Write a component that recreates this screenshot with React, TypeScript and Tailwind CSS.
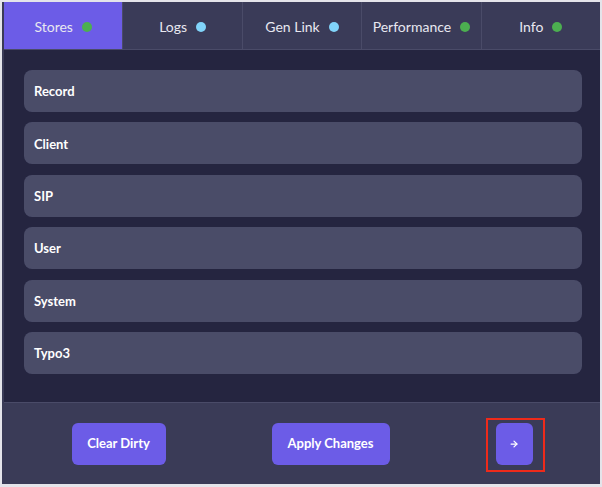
import React, { useState } from 'react';
import { ArrowRight } from 'lucide-react';

const tabs = [
  { name: 'Stores', dot: 'bg-[#4caf50]' },
  { name: 'Logs', dot: 'bg-[#81d4fa]' },
  { name: 'Gen Link', dot: 'bg-[#81d4fa]' },
  { name: 'Performance', dot: 'bg-[#4caf50]' },
  { name: 'Info', dot: 'bg-[#4caf50]' },
];

const stores = ['Record', 'Client', 'SIP', 'User', 'System', 'Typo3'];

const App: React.FC = () => {
  const [active, setActive] = useState('Stores');

  return (
    <div className="h-[487px] w-[602px] bg-[#e4e4ea] pt-[2px] pl-[2px]" style={{ fontFamily: 'Lato, "Noto Sans", sans-serif' }}>
      <div className="flex h-[482px] w-[598px] flex-col border-l-2 border-[#3a3b57] bg-[#252540]">
        {/* tab bar */}
        <div className="flex h-[48px] border-b border-[#4a4b68] bg-[#3a3b58]">
          {tabs.map((tab, i) => (
            <button
              key={tab.name}
              onClick={() => setActive(tab.name)}
              className={`flex flex-1 items-center justify-center gap-[9px] pt-[2px] text-[14px] text-[#e8e8f0] ${
                i > 0 ? 'border-l border-[#4a4b68]' : ''
              } ${active === tab.name ? 'bg-[#6c5ce7]' : ''}`}
            >
              <span>{tab.name}</span>
              <span className={`h-[10px] w-[10px] rounded-full ${tab.dot}`} />
            </button>
          ))}
        </div>

        {/* store list */}
        <div className="flex flex-1 flex-col gap-[10.4px] pl-[20px] pr-[18px] pt-[20px]">
          {stores.map(store => (
            <div
              key={store}
              className="flex h-[42px] items-center rounded-lg bg-[#4a4c68] pl-[10px] pt-[2px] text-[13px] font-bold text-white"
            >
              {store}
            </div>
          ))}
        </div>

        {/* footer */}
        <div className="flex h-[82px] items-center justify-center gap-[106px] border-t border-[#4a4b68] bg-[#3a3b57]">
          <button className="h-[42px] w-[94px] rounded-md bg-[#6c5ce7] pt-[1px] text-[13px] font-bold text-white">
            Clear Dirty
          </button>
          <button className="h-[42px] w-[118px] rounded-md bg-[#6c5ce7] pt-[1px] text-[13px] font-bold text-white">
            Apply Changes
          </button>
          <div className="relative">
            <button className="flex h-[42px] w-[37px] items-center justify-center rounded-md bg-[#6c5ce7] text-white">
              <ArrowRight size={10} strokeWidth={3} />
            </button>
            <span className="pointer-events-none absolute -top-[5px] -bottom-[7px] -left-[10px] -right-[12px] border-2 border-[#ee2a1a]" />
          </div>
        </div>
      </div>
    </div>
  );
};

export default App;
